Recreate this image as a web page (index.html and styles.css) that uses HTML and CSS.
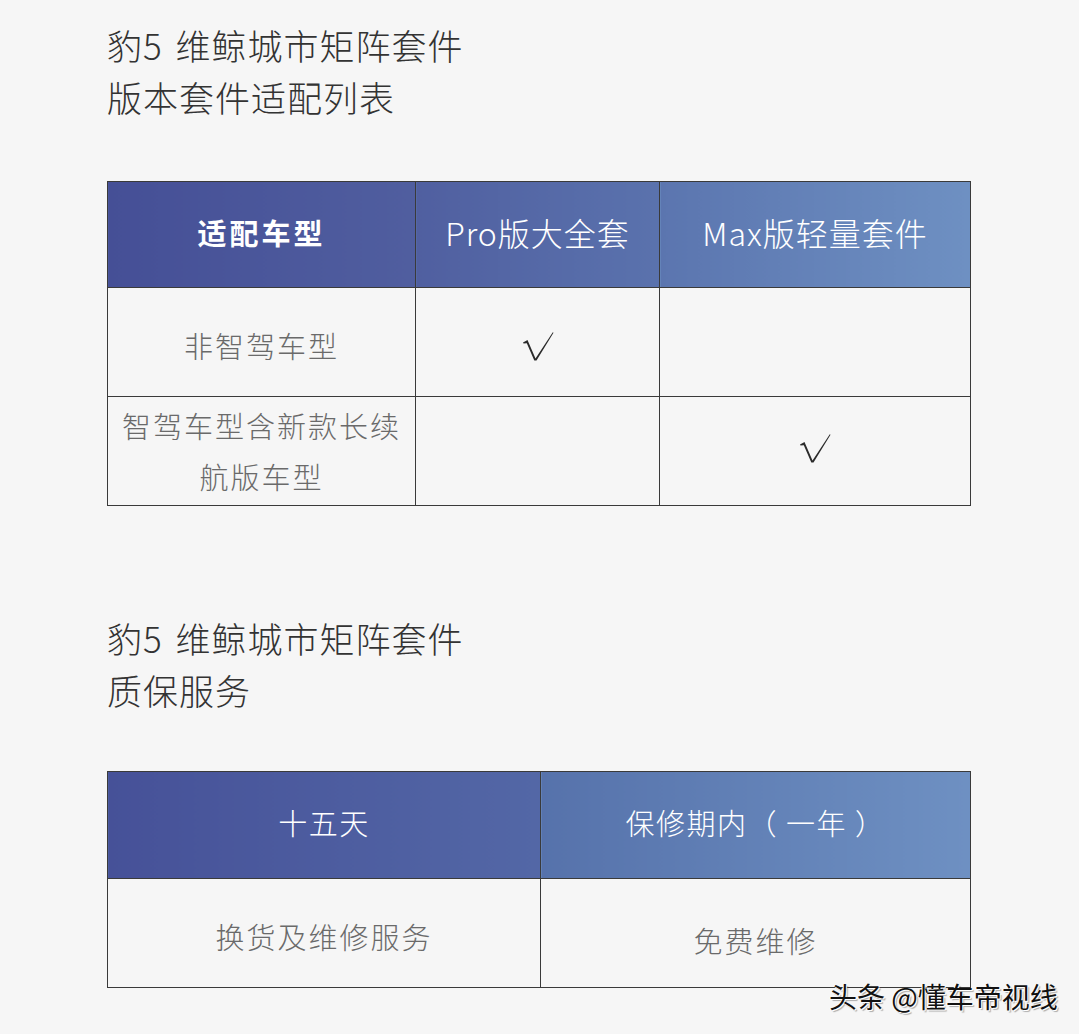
FILE: index.html
```html
<!DOCTYPE html>
<html lang="zh-CN">
<head>
<meta charset="utf-8">
<link rel="stylesheet" href="styles.css">
</head>
<body>
<main class="page">
  <h1 class="title">豹5 维鲸城市矩阵套件<br>版本套件适配列表</h1>
  <table class="grid grid-3">
    <thead>
      <tr>
        <th class="c1 strong">适配车型</th>
        <th class="c2">Pro版大全套</th>
        <th class="c3">Max版轻量套件</th>
      </tr>
    </thead>
    <tbody>
      <tr>
        <td>非智驾车型</td>
        <td class="check"><svg class="tick" width="32" height="30" viewBox="0 0 32 30"><path d="M1 11.5 L5.5 9 L13.5 27.5 L30.8 1.2 L31.5 1.8 L14.5 29.5 L12.3 29.5 L4.8 12.3 L1.5 12.6 Z" fill="#2b2b2b"/></svg></td>
        <td></td>
      </tr>
      <tr>
        <td class="two">智驾车型含新款长续<br>航版车型</td>
        <td></td>
        <td class="check up"><svg class="tick" width="32" height="30" viewBox="0 0 32 30"><path d="M1 11.5 L5.5 9 L13.5 27.5 L30.8 1.2 L31.5 1.8 L14.5 29.5 L12.3 29.5 L4.8 12.3 L1.5 12.6 Z" fill="#2b2b2b"/></svg></td>
      </tr>
    </tbody>
  </table>

  <h1 class="title title-2">豹5 维鲸城市矩阵套件<br>质保服务</h1>
  <table class="grid grid-2">
    <thead>
      <tr>
        <th class="d1">十五天</th>
        <th class="d2">保修期内（ 一年 ）</th>
      </tr>
    </thead>
    <tbody>
      <tr>
        <td>换货及维修服务</td>
        <td class="lower">免费维修</td>
      </tr>
    </tbody>
  </table>
  <div class="watermark">头条 @懂车帝视线</div>
</main>
</body>
</html>
```
FILE: styles.css
```css
html, body {
  margin: 0;
  padding: 0;
  background: #f6f6f6;
}
.page {
  position: relative;
  width: 1079px;
  height: 1034px;
  padding: 19px 0 0 107px;
  box-sizing: border-box;
  font-family: "Noto Sans CJK SC", "Noto Sans", sans-serif;
}
.title {
  margin: 0;
  font-size: 35px;
  line-height: 52px;
  font-weight: 300;
  letter-spacing: 1px;
  word-spacing: 4px;
  color: #333;
}
.title-2 {
  margin-top: 106px;
}
.grid {
  border-collapse: collapse;
  margin-top: 58px;
  table-layout: fixed;
}
.grid-3 {
  width: 864px;
}
.grid-2 {
  width: 864px;
  margin-top: 55px;
}
.grid th, .grid td {
  border: 1px solid #3a3a3a;
  padding: 0;
  text-align: center;
  vertical-align: middle;
}
.grid th {
  height: 100px;
  padding-bottom: 6px;
  color: #fff;
  font-weight: 300;
  font-size: 32px;
  letter-spacing: 1px;
}
.grid-3 th {
  height: 99px;
}
.grid th.strong {
  font-weight: 700;
  font-size: 29px;
  letter-spacing: 3px;
}
.grid-2 th {
  font-size: 29px;
  letter-spacing: 1.5px;
}
.grid-3 .c1 { width: 307px; background: linear-gradient(90deg, #454f96, #505e9f); }
.grid-3 .c2 { width: 243px; background: linear-gradient(90deg, #505fa0, #5a72ad); }
.grid-3 .c3 { background: linear-gradient(90deg, #5b75af, #6e90c2); }
.grid-2 .d1 { width: 432px; background: linear-gradient(90deg, #465198, #5367a6); }
.grid-2 .d2 { background: linear-gradient(90deg, #5672ab, #6e90c2); }
.grid td {
  height: 101px;
  padding-top: 7px;
  color: #6a6a6a;
  font-size: 29px;
  font-weight: 300;
  letter-spacing: 2px;
  line-height: 51px;
}
.grid td.two {
  padding-top: 0;
  height: 108px;
}
.grid td.check {
  line-height: 0;
  padding-top: 3px;
  height: 105px;
}
.grid td.check.up {
  padding-top: 0;
  padding-bottom: 10px;
  height: 98px;
}
.tick {
  display: inline-block;
  vertical-align: middle;
  margin-top: 4px;
}
.grid td.lower {
  padding-top: 14px;
  height: 94px;
}
.watermark {
  position: absolute;
  left: 829px;
  top: 976px;
  font-size: 28px;
  line-height: 40px;
  color: #111;
  font-weight: 400;
  text-shadow: 1px 1px 0 #fff, -1px 0 0 #fff, 2px 2px 1px rgba(0,0,0,0.3);
}
```
